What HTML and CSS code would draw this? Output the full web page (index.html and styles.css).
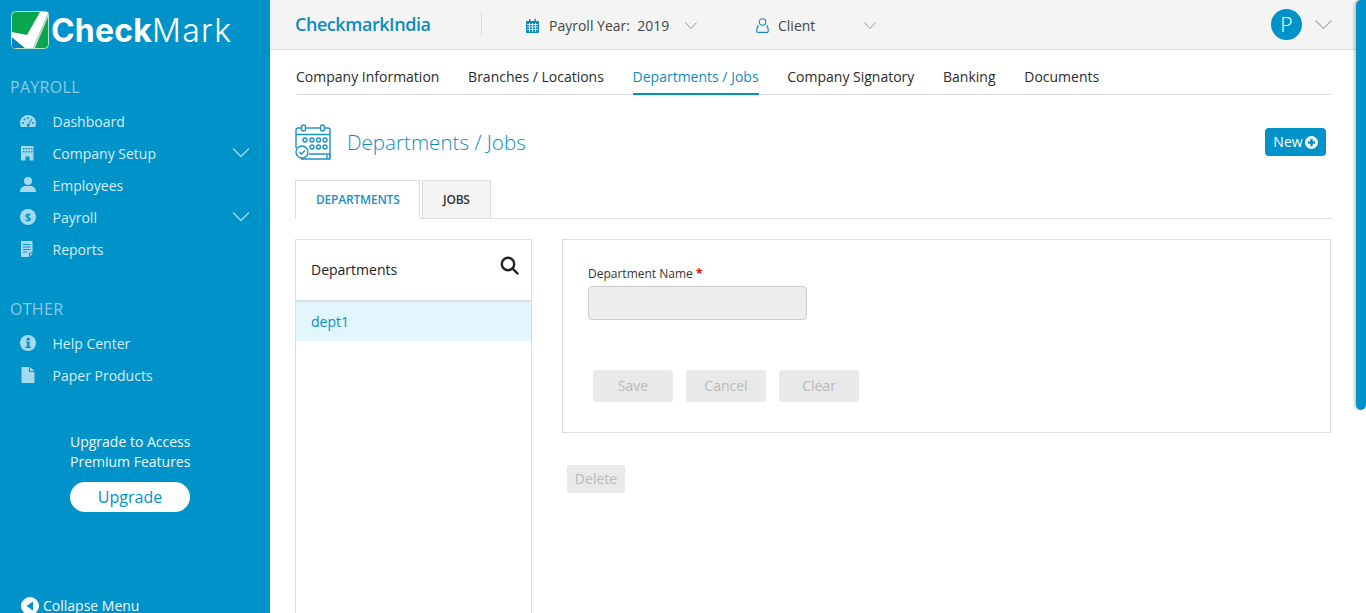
FILE: index.html
```html
<!DOCTYPE html>
<html lang="en">
<head>
<meta charset="utf-8">
<title>Departments / Jobs</title>
<link rel="stylesheet" href="styles.css">
</head>
<body>
<div class="app">
  <aside class="sidebar">
    <div class="logo">
      <svg class="logo-mark" width="38" height="38" viewBox="0 0 38 38">
        <rect x="0.5" y="0.5" width="37" height="37" rx="4" fill="#0aa54f" stroke="#b9e3c8"/>
        <path d="M1 26l12 11H3a2 2 0 0 1-2-2z" fill="#0a7fc4"/>
        <path d="M0.500 21l15.500 3L29 1h8.500L22 37h-8L.5 26z" fill="#fff"/>
        <path d="M37.500 1v4L24 37h-2z" fill="#cfd6d0"/>
      </svg>
      <span class="logo-text"><b>Check</b><span class="logo-light">Mark</span></span>
    </div>
    <div class="side-head">PAYROLL</div>
    <nav class="side-nav">
      <a class="side-item"><svg class="side-icon" viewBox="0 0 16 16"><path d="M8 2a8 8 0 0 0-8 8c0 1.500.4 2.900 1.100 4h13.800A8 8 0 0 0 16 10a8 8 0 0 0-8-8z"/><g fill="#0093c9"><circle cx="3" cy="10" r="1"/><circle cx="4.500" cy="6.500" r="1"/><circle cx="8" cy="5" r="1"/><circle cx="13" cy="10" r="1"/><path d="M11.500 5.500l.9.5-3 5.200a1.500 1.500 0 1 1-.9-.5z"/></g></svg><span>Dashboard</span></a>
      <a class="side-item"><svg class="side-icon" viewBox="0 0 16 16"><path fill-rule="evenodd" d="M1 1h12.500v14.500H9.500v-4h-4v4H1zM3 3v1.500h1.500V3zm2.700 0v1.500h1.500V3zm2.700 0v1.500h1.500V3zm2.700 0v1.500h1.400V3zM3 6v1.500h1.500V6zm2.700 0v1.500h1.500V6zm2.700 0v1.500h1.500V6zm2.700 0v1.500h1.400V6z"/></svg><span>Company Setup</span><svg class="side-chev" viewBox="0 0 18 12"><path d="M1 1.500l8 8 8-8"/></svg></a>
      <a class="side-item"><svg class="side-icon" viewBox="0 0 16 16"><circle cx="8" cy="4" r="4"/><path d="M0 15c0-3.500 2.500-6 5-6h6c2.500 0 5 2.500 5 6z"/></svg><span>Employees</span></a>
      <a class="side-item"><svg class="side-icon" viewBox="0 0 16 16"><circle cx="8" cy="8" r="8"/><text x="8" y="12" class="dollar">$</text></svg><span>Payroll</span><svg class="side-chev" viewBox="0 0 18 12"><path d="M1 1.500l8 8 8-8"/></svg></a>
      <a class="side-item"><svg class="side-icon" viewBox="0 0 16 16"><path fill-rule="evenodd" d="M1 0h11.500v11.500h-2.500a1 1 0 0 0-1 1V16H1zM3 3v1h7.500V3zm0 2.500v1h7.500v-1zM3 8v1h7.500V8zm0 2.500v1h4v-1z"/><path d="M10 12.500h2.500L10 15.500z"/></svg><span>Reports</span></a>
    </nav>
    <div class="side-head side-head-other">OTHER</div>
    <nav class="side-nav">
      <a class="side-item"><svg class="side-icon" viewBox="0 0 16 16"><circle cx="8" cy="8" r="8"/><g fill="#0093c9"><circle cx="8.200" cy="4.200" r="1.600"/><path d="M6 6.800h3.500v5H11V13H5.500v-1.200H7V8H6z"/></g></svg><span>Help Center</span></a>
      <a class="side-item"><svg class="side-icon" viewBox="0 0 16 16"><path d="M1.500 0H9v5h5.500v11h-13zM10 0l4.500 4H10z"/></svg><span>Paper Products</span></a>
    </nav>
    <div class="upgrade">
      <p class="upgrade-text">Upgrade to Access<br>Premium Features</p>
      <button class="upgrade-btn">Upgrade</button>
    </div>
    <div class="collapse">
      <svg width="18" height="18" viewBox="0 0 18 18"><circle cx="9" cy="9" r="9" fill="#fff"/><path d="M12 4.500v9L5.500 9z" fill="#0093c9"/></svg>
      <span>Collapse Menu</span>
    </div>
  </aside>

  <div class="main">
    <header class="topbar">
      <span class="brand">CheckmarkIndia</span>
      <span class="divider"></span>
      <div class="top-item top-year">
        <svg width="13" height="14" viewBox="0 0 13 14" class="cal-small"><path d="M0 2h13v12H0z"/><path d="M3 0h1.500v3H3zM8.500 0H10v3H8.500z"/><path d="M1 5.500h11M1 8h11M1 10.500h11M3.500 4v9M6.500 4v9M9.500 4v9" stroke="#f4f4f4" stroke-width=".8"/></svg>
        <span>Payroll Year:&nbsp; 2019</span>
        <svg class="top-chev" viewBox="0 0 12 8"><path d="M.5.500l5.500 6 5.500-6"/></svg>
      </div>
      <div class="top-item top-client">
        <svg width="13" height="15" viewBox="0 0 13 15" class="user-small"><circle cx="6.500" cy="4" r="3.200"/><path d="M2.500 7.500C1.200 8.500.7 10 .7 13c0 1 .5 1.400 1.300 1.400h9c.8 0 1.300-.4 1.300-1.400 0-3-.5-4.500-1.800-5.500"/></svg>
        <span>Client</span>
        <svg class="top-chev top-chev-client" viewBox="0 0 12 8"><path d="M.5.500l5.500 6 5.500-6"/></svg>
      </div>
      <div class="top-user">
        <span class="avatar">P</span>
        <svg class="user-chev" viewBox="0 0 17 10"><path d="M.5.500l8 8 8-8"/></svg>
      </div>
    </header>

    <div class="content">
      <nav class="tabs">
        <a class="tab">Company Information</a>
        <a class="tab">Branches / Locations</a>
        <a class="tab tab-active">Departments / Jobs</a>
        <a class="tab">Company Signatory</a>
        <a class="tab">Banking</a>
        <a class="tab">Documents</a>
      </nav>

      <div class="page-head">
        <svg class="page-icon" width="37" height="37" viewBox="0 0 37 37">
          <path d="M6 4H3a2 2 0 0 0-2 2v18"/><path d="M11 4h14"/><path d="M30 4h3a2 2 0 0 1 2 2v27"/>
          <rect x="6.500" y="1" width="4" height="6" rx="2"/><rect x="25.500" y="1" width="4" height="6" rx="2"/>
          <path d="M1 10.500h34"/>
          <circle cx="10" cy="16" r="2"/><circle cx="17" cy="16" r="2"/><circle cx="23.500" cy="16" r="2"/><circle cx="30" cy="16" r="2"/>
          <circle cx="17" cy="23" r="2"/><circle cx="23.500" cy="23" r="2"/><circle cx="30" cy="23" r="2"/>
          <path d="M14 30h21M6 35h26v-4M32 35h3v-5"/>
          <circle cx="7" cy="28" r="6"/><path d="M4.500 28l2 2 3.500-3.500"/>
        </svg>
        <h1 class="page-title">Departments / Jobs</h1>
        <button class="new-btn">New<svg width="13" height="13" viewBox="0 0 13 13"><circle cx="6.500" cy="6.500" r="6.500" fill="#fff"/><path d="M5.300 2.800h2.400v2.500h2.500v2.400H7.700v2.500H5.300V7.700H2.800V5.300h2.500z" fill="#0093c9"/></svg></button>
      </div>

      <div class="subtabs">
        <a class="subtab subtab-active">DEPARTMENTS</a>
        <a class="subtab">JOBS</a>
      </div>

      <div class="columns">
        <section class="list-panel">
          <div class="list-head">
            <span>Departments</span>
            <svg width="19" height="19" viewBox="0 0 19 19" class="search"><circle cx="8" cy="8" r="6.200"/><path d="M12.500 12.500l5 5" stroke-linecap="round"/></svg>
          </div>
          <div class="list-row">dept1</div>
        </section>
        <div class="detail">
          <section class="form-panel">
            <label class="field-label">Department Name <span class="req">*</span></label>
            <input class="field-input" type="text" disabled>
            <div class="form-actions">
              <button class="btn-off">Save</button>
              <button class="btn-off">Cancel</button>
              <button class="btn-off">Clear</button>
            </div>
          </section>
          <button class="btn-off btn-delete">Delete</button>
        </div>
      </div>
    </div>
  </div>
  <div class="scroll-thumb"></div>
</div>
</body>
</html>
```

FILE: styles.css
```css
* { box-sizing: border-box; }
html, body { margin: 0; height: 100%; overflow: hidden; }
body { font-family: "Open Sans", "Liberation Sans", sans-serif; color: #222; background: #fff; }
button { font-family: inherit; border: 0; }
p, h1 { margin: 0; }

.app { display: flex; height: 613px; overflow: hidden; position: relative; }

.sidebar { width: 270px; flex: none; background: #0093c9; color: #d5eef8; display: flex; flex-direction: column; height: 613px; overflow: hidden; position: relative; }
.logo { display: flex; align-items: center; height: 38px; margin: 11px 0 0 11px; }
.logo-mark { flex: none; }
.logo-text { font-family: "Inter", "Open Sans", sans-serif; font-size: 32px; line-height: 38px; color: #fff; margin-left: 2px; padding-top: 2px; letter-spacing: .2px; }
.logo-text b { font-weight: 700; }
.logo-light { font-weight: 300; letter-spacing: 1.300px; }
.side-head { font-size: 16px; line-height: 22px; color: #8ccbe4; margin: 27px 0 0 10px; letter-spacing: .3px; }
.side-head-other { margin-top: 33px; }
.side-nav { display: flex; flex-direction: column; margin-top: 7px; }
.side-item { display: flex; align-items: center; height: 32px; padding-left: 20px; font-size: 14px; color: #d5eef8; position: relative; }
.side-item span { margin-left: 16.500px; }
.side-icon { width: 16px; height: 16px; fill: #a6d9ee; flex: none; }
.dollar { font-family: "Open Sans", sans-serif; font-size: 11px; font-weight: 700; text-anchor: middle; fill: #0093c9; }
.side-chev { width: 18px; height: 12px; fill: none; stroke: #a6d9ee; stroke-width: 1.300; position: absolute; left: 232px; top: 10px; }

.upgrade { margin: 41px 0 0 70px; width: 120px; }
.upgrade-text { font-size: 14px; line-height: 20px; color: #eef8fc; white-space: nowrap; }
.upgrade-btn { display: block; width: 120px; height: 30px; margin-top: 10px; border-radius: 15px; background: #fff; color: #0093c9; font-size: 16px; padding: 0; }
.collapse { position: absolute; left: 21px; top: 596px; display: flex; align-items: center; gap: 4px; font-size: 14px; color: #eef8fc; white-space: nowrap; }

.main { flex: 1; min-width: 0; display: flex; flex-direction: column; }
.topbar { height: 50px; flex: none; background: #f4f4f4; border-bottom: 1px solid #ddd; display: flex; align-items: center; padding-left: 25px; }
.brand { font-size: 18px; font-weight: 600; color: #0e8cc0; width: 186px; letter-spacing: -.45px; padding-bottom: 1px; }
.divider { width: 1px; height: 25px; background: #ddd; }
.top-item { display: flex; align-items: center; font-size: 14px; color: #444; padding-top: 2px; }
.top-year { margin-left: 44px; width: 230px; }
.top-year span { margin-left: 10px; }
.cal-small { fill: #0e8cc0; }
.user-small { fill: none; stroke: #0e8cc0; stroke-width: 1.100; }
.top-client span { margin-left: 9px; }
.top-chev { width: 12px; height: 8px; fill: none; stroke: #999; stroke-width: 1; margin-left: 16px; }
.top-chev-client { margin-left: 49px; }
.top-user { margin-left: auto; margin-right: 34px; display: flex; align-items: center; gap: 13px; }
.avatar { width: 31px; height: 31px; border-radius: 50%; background: #0093c9; color: #fff; font-family: "Open Sans", sans-serif; font-weight: 300; font-size: 21px; line-height: 30px; text-align: center; }
.user-chev { width: 17px; height: 10px; fill: none; stroke: #aaa; stroke-width: 1.100; }

.content { padding: 0 35px 0 25px; flex: 1; min-height: 0; }
.tabs { display: flex; gap: 28.700px; height: 45px; border-bottom: 1px solid #ddd; margin-left: 1px; }
.tab { font-size: 14px; font-weight: 500; line-height: 20px; padding-top: 17px; height: 45px; color: #2b2b2b; white-space: nowrap; }
.tab-active { color: #0e8cc0; border-bottom: 2px solid #0093c9; }

.page-head { display: flex; align-items: center; height: 37px; margin: 29px 5px 0 0; padding-left: 0; }
.page-icon { fill: none; stroke: #1a93c8; stroke-width: 1.400; flex: none; }
.page-title { font-size: 20.600px; font-weight: 300; color: #0e8cc0; margin-left: 15px; padding-bottom: 1px; }
.new-btn { margin-left: auto; align-self: flex-start; margin-top: 4px; width: 61px; height: 28px; border-radius: 4px; background: #0093c9; color: #fff; font-size: 14px; font-weight: 500; display: flex; align-items: center; justify-content: center; gap: 2px; padding: 0 0 1px; }
.new-btn svg { margin-top: 1px; }

.subtabs { display: flex; gap: 2px; height: 39px; margin-top: 19px; border-bottom: 1px solid #ddd; }
.subtab { height: 38px; padding: 0 20px; border: 1px solid #ddd; border-bottom: 0; background: #f4f4f4; font-size: 12px; font-weight: 600; letter-spacing: -.2px; line-height: 38px; color: #333; }
.subtab-active { background: #fff; color: #1a8fc4; height: 39px; width: 125px; }

.columns { display: flex; gap: 30px; margin-top: 20px; }
.list-panel { width: 237px; height: 400px; flex: none; border: 1px solid #ddd; }
.list-head { height: 62px; border-bottom: 2px solid #ddd; display: flex; align-items: center; justify-content: space-between; padding: 0 12px 2px 15px; font-size: 14px; font-weight: 500; }
.search { fill: none; stroke: #222; stroke-width: 2.400; margin-top: -8px; }
.list-row { height: 39px; background: #e2f6fd; color: #0e8cc0; font-size: 14px; font-weight: 500; line-height: 39px; padding-left: 15px; }

.detail { flex: 1; min-width: 0; }
.form-panel { height: 194px; border: 1px solid #ddd; padding: 25px 25px 0; }
.field-label { display: block; font-size: 12px; line-height: 18px; color: #333; }
.req { color: #f00; font-weight: 700; }
.field-input { display: block; width: 219px; height: 34px; margin-top: 3px; background: #eee; border: 1px solid #ccc; border-radius: 4px; padding: 0; }
.form-actions { display: flex; gap: 13px; margin: 50px 0 0 5px; }
.btn-off { width: 80px; height: 32px; background: #e9e9e9; color: #b9b9b9; border-radius: 3px; font-size: 14px; padding: 0 0 2px; }
.btn-delete { display: block; width: 58px; height: 28px; margin: 32px 0 0 5px; }

.scroll-thumb { position: absolute; left: 1356px; top: 0; width: 10px; height: 410px; background: #0093c9; border-radius: 5px 0 5px 5px; box-shadow: -2px 0 3px rgba(0,0,0,.2); }
```
